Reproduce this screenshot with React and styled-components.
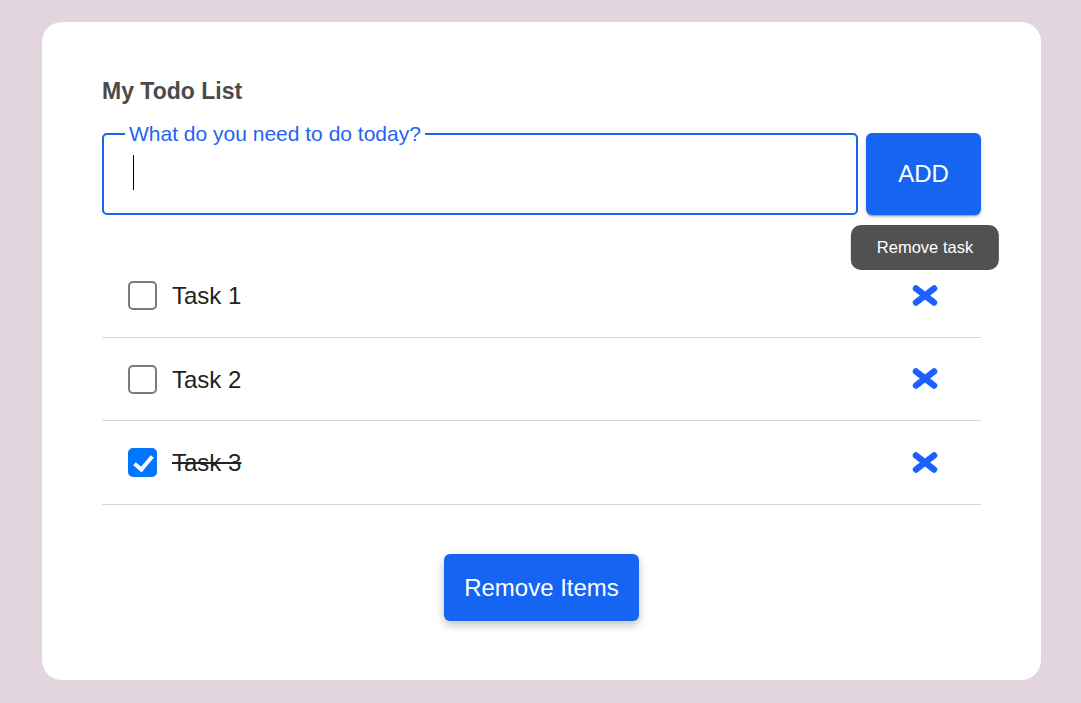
import React, { useState } from 'react';
import styled, { createGlobalStyle } from 'styled-components';

const initialTasks = [
  { id: 1, text: 'Task 1', done: false },
  { id: 2, text: 'Task 2', done: false },
  { id: 3, text: 'Task 3', done: true }
];

const GlobalStyle = createGlobalStyle`
  html, body {
    margin: 0;
    padding: 0;
    background: #e2d5de;
    font-family: "Liberation Sans", Arial, sans-serif;
  }
  * { box-sizing: border-box; }
`;

const CloseIcon = () => (
  <svg width="26" height="21" viewBox="0 0 26 21" aria-hidden="true">
    <path d="M4 3.5 L22 17.5 M22 3.5 L4 17.5" stroke="#1c60ff" strokeWidth="6.5" strokeLinecap="round" fill="none" />
  </svg>
);

const App = () => {
  const [tasks, setTasks] = useState(initialTasks);
  const [value, setValue] = useState('');

  const toggleTask = (id) => {
    setTasks(tasks.map((t) => (t.id === id ? { ...t, done: !t.done } : t)));
  };

  const removeTask = (id) => setTasks(tasks.filter((t) => t.id !== id));

  const addTask = () => {
    if (!value.trim()) return;
    setTasks([...tasks, { id: Date.now(), text: value.trim(), done: false }]);
    setValue('');
  };

  const removeDone = () => setTasks(tasks.filter((t) => !t.done));

  return (
    <>
      <GlobalStyle />
      <Card>
        <Title>My Todo List</Title>
        <InputRow>
          <Field>
            <Legend>What do you need to do today?</Legend>
            <FieldInner>
              {!value && <Caret />}
              <TextInput value={value} onChange={(e) => setValue(e.target.value)} />
            </FieldInner>
          </Field>
          <AddButton onClick={addTask}>ADD</AddButton>
        </InputRow>

        <List>
          {tasks.map((task, index) => (
            <Row key={task.id}>
              <Check type="checkbox" checked={task.done} onChange={() => toggleTask(task.id)} />
              <TaskText done={task.done}>{task.text}</TaskText>
              <DeleteButton onClick={() => removeTask(task.id)} aria-label="Remove task">
                {index === 0 && <Tooltip>Remove task</Tooltip>}
                <CloseIcon />
              </DeleteButton>
            </Row>
          ))}
        </List>

        <Footer>
          <RemoveButton onClick={removeDone}>Remove Items</RemoveButton>
        </Footer>
      </Card>
    </>
  );
};

export default App;

const Card = styled.div`
  width: 999px;
  margin: 22px 0 23px 42px;
  background: #ffffff;
  border-radius: 20px;
  padding: 56px 60px 59px;
`;

const Title = styled.h2`
  margin: 0;
  font-size: 23px;
  line-height: 27px;
  font-weight: 700;
  color: #4a4a4a;
`;

const InputRow = styled.div`
  display: flex;
  align-items: flex-end;
  gap: 8px;
  margin-top: 18px;
`;

const Field = styled.fieldset`
  flex: 1;
  margin: 0;
  padding: 0 21px 14px;
  border: 2px solid #1565f0;
  border-radius: 5px;
  min-width: 0;
`;

const Legend = styled.legend`
  padding: 0 4px;
  font-size: 21px;
  line-height: 22px;
  color: #2563f0;
`;

const FieldInner = styled.div`
  display: flex;
  align-items: center;
  height: 54px;
  padding-left: 8px;
`;

const Caret = styled.span`
  width: 1px;
  height: 35px;
  background: #000;
  flex: none;
`;

const TextInput = styled.input`
  flex: 1;
  border: none;
  outline: none;
  font-family: inherit;
  font-size: 22px;
  background: transparent;
  padding: 0;
  height: 100%;
`;

const AddButton = styled.button`
  width: 115px;
  height: 82px;
  border: none;
  border-radius: 6px;
  background: #1565f2;
  color: #ffffff;
  font-family: inherit;
  font-size: 24px;
  cursor: pointer;
  box-shadow: 0 3px 1px -2px rgba(0, 0, 0, 0.2), 0 2px 2px 0 rgba(0, 0, 0, 0.14), 0 1px 5px 0 rgba(0, 0, 0, 0.12);
`;

const List = styled.ul`
  list-style: none;
  margin: 39px 0 0;
  padding: 0;
`;

const Row = styled.li`
  display: flex;
  align-items: center;
  height: 83.5px;
  padding: 0 43px 0 26px;
  border-bottom: 1px solid #d6d7da;
`;

const Check = styled.input`
  appearance: none;
  -webkit-appearance: none;
  position: relative;
  width: 29px;
  height: 29px;
  margin: 1px 0 0;
  flex: none;
  cursor: pointer;
  border: 2.5px solid #7a7a7a;
  border-radius: 5px;
  background: #ffffff;

  &:checked {
    border-color: #0075ff;
    background: #0075ff;
  }

  &:checked::after {
    content: '';
    position: absolute;
    left: 7.5px;
    top: 1.5px;
    width: 7px;
    height: 15px;
    border: solid #ffffff;
    border-width: 0 4px 4px 0;
    transform: rotate(40deg);
  }
`;

const TaskText = styled.span`
  flex: 1;
  margin-left: 15px;
  padding-top: 2px;
  font-size: 24px;
  color: #222222;
  text-decoration: ${({ done }) => (done ? 'line-through' : 'none')};
`;

const DeleteButton = styled.button`
  position: relative;
  display: flex;
  padding: 0;
  border: none;
  background: none;
  cursor: pointer;
`;

const Tooltip = styled.span`
  position: absolute;
  left: 50%;
  bottom: calc(100% + 15px);
  transform: translateX(-50%);
  height: 45px;
  padding: 0 26px;
  line-height: 45px;
  white-space: nowrap;
  border-radius: 10px;
  background: #515151;
  color: #ffffff;
  font-family: "Liberation Sans", Arial, sans-serif;
  font-size: 16.5px;
`;

const Footer = styled.div`
  display: flex;
  justify-content: center;
  margin-top: 49.5px;
`;

const RemoveButton = styled.button`
  height: 67px;
  padding: 0 20px;
  border: none;
  border-radius: 6px;
  background: #1565f2;
  color: #ffffff;
  font-family: inherit;
  font-size: 24px;
  cursor: pointer;
  box-shadow: 0 4px 10px rgba(0, 0, 0, 0.25);
`;
